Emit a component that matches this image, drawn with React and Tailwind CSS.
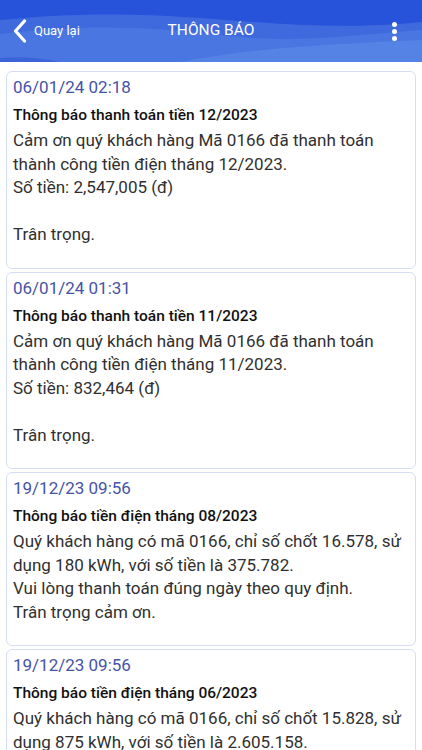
import React from "react";

const notices = [
  {
    time: "06/01/24 02:18",
    title: "Thông báo thanh toán tiền 12/2023",
    body: "Cảm ơn quý khách hàng Mã 0166 đã thanh toán thành công tiền điện tháng 12/2023.\nSố tiền: 2,547,005 (đ)\n\nTrân trọng.",
  },
  {
    time: "06/01/24 01:31",
    title: "Thông báo thanh toán tiền 11/2023",
    body: "Cảm ơn quý khách hàng Mã 0166 đã thanh toán thành công tiền điện tháng 11/2023.\nSố tiền: 832,464 (đ)\n\nTrân trọng.",
  },
  {
    time: "19/12/23 09:56",
    title: "Thông báo tiền điện tháng 08/2023",
    body: "Quý khách hàng có mã 0166, chỉ số chốt 16.578, sử dụng 180 kWh, với số tiền là 375.782.\nVui lòng thanh toán đúng ngày theo quy định.\nTrân trọng cảm ơn.",
  },
  {
    time: "19/12/23 09:56",
    title: "Thông báo tiền điện tháng 06/2023",
    body: "Quý khách hàng có mã 0166, chỉ số chốt 15.828, sử dụng 875 kWh, với số tiền là 2.605.158.\nVui lòng thanh toán đúng ngày theo quy định.\nTrân trọng cảm ơn.",
  },
];

function HeaderWaves() {
  return (
    <svg
      className="absolute inset-0 h-full w-full"
      viewBox="0 0 422 62"
      preserveAspectRatio="none"
    >
      <rect width="422" height="62" fill="#2752da" />
      <path
        d="M0 20 C 60 14, 120 12, 200 18 C 280 24, 340 30, 422 22 L422 62 L0 62 Z"
        fill="#3f6ade"
      />
      <path
        d="M0 34 C 80 24, 150 26, 230 36 C 300 44, 360 34, 422 30 L422 62 L0 62 Z"
        fill="#4a76e1"
      />
      <path
        d="M180 62 C 250 48, 330 44, 422 40 L422 62 Z"
        fill="#5582e5"
      />
      <path d="M0 58 C 20 56, 40 58, 60 62 L0 62 Z" fill="#3a64d8" />
    </svg>
  );
}

function Header() {
  return (
    <div className="relative h-[62px] overflow-hidden">
      <HeaderWaves />
      <div className="relative flex h-full items-center px-[12px] text-white">
        <div className="flex w-[120px] items-center gap-[6px]">
          <svg width="16" height="24" viewBox="0 0 16 24" fill="none">
            <path
              d="M12.5 2 L3.5 12 L12.5 22"
              stroke="white"
              strokeWidth="3.2"
              strokeLinecap="round"
              strokeLinejoin="round"
            />
          </svg>
          <span className="text-[13px]">Quay lại</span>
        </div>
        <div className="flex-1 text-center text-[15.5px]">THÔNG BÁO</div>
        <div className="flex w-[120px] justify-end pr-[13px]">
          <div className="flex flex-col gap-[2px]">
            <span className="block h-[5px] w-[5px] rounded-full bg-white" />
            <span className="block h-[5px] w-[5px] rounded-full bg-white" />
            <span className="block h-[5px] w-[5px] rounded-full bg-white" />
          </div>
        </div>
      </div>
    </div>
  );
}

function NoticeCard({ time, title, body }) {
  return (
    <div className="rounded-[6px] border border-[#d3def4] bg-white px-[6px] pb-[21px] pt-[3px]">
      <div className="text-[17px] leading-[24px] text-[#4653a6]">{time}</div>
      <div className="mt-[5px] text-[15.5px] font-medium leading-[22px] text-[#111]">
        {title}
      </div>
      <div className="mt-[3px] whitespace-pre-line text-[17px] leading-[23.5px] text-[#303030]">
        {body}
      </div>
    </div>
  );
}

export default function App() {
  return (
    <div
      className="h-[750px] overflow-hidden bg-white"
      style={{ fontFamily: "Roboto, 'Noto Sans', sans-serif" }}
    >
      <Header />
      <div className="flex flex-col gap-[3px] px-[6px] pt-[9px]">
        {notices.map((n, i) => (
          <NoticeCard key={i} {...n} />
        ))}
      </div>
    </div>
  );
}
